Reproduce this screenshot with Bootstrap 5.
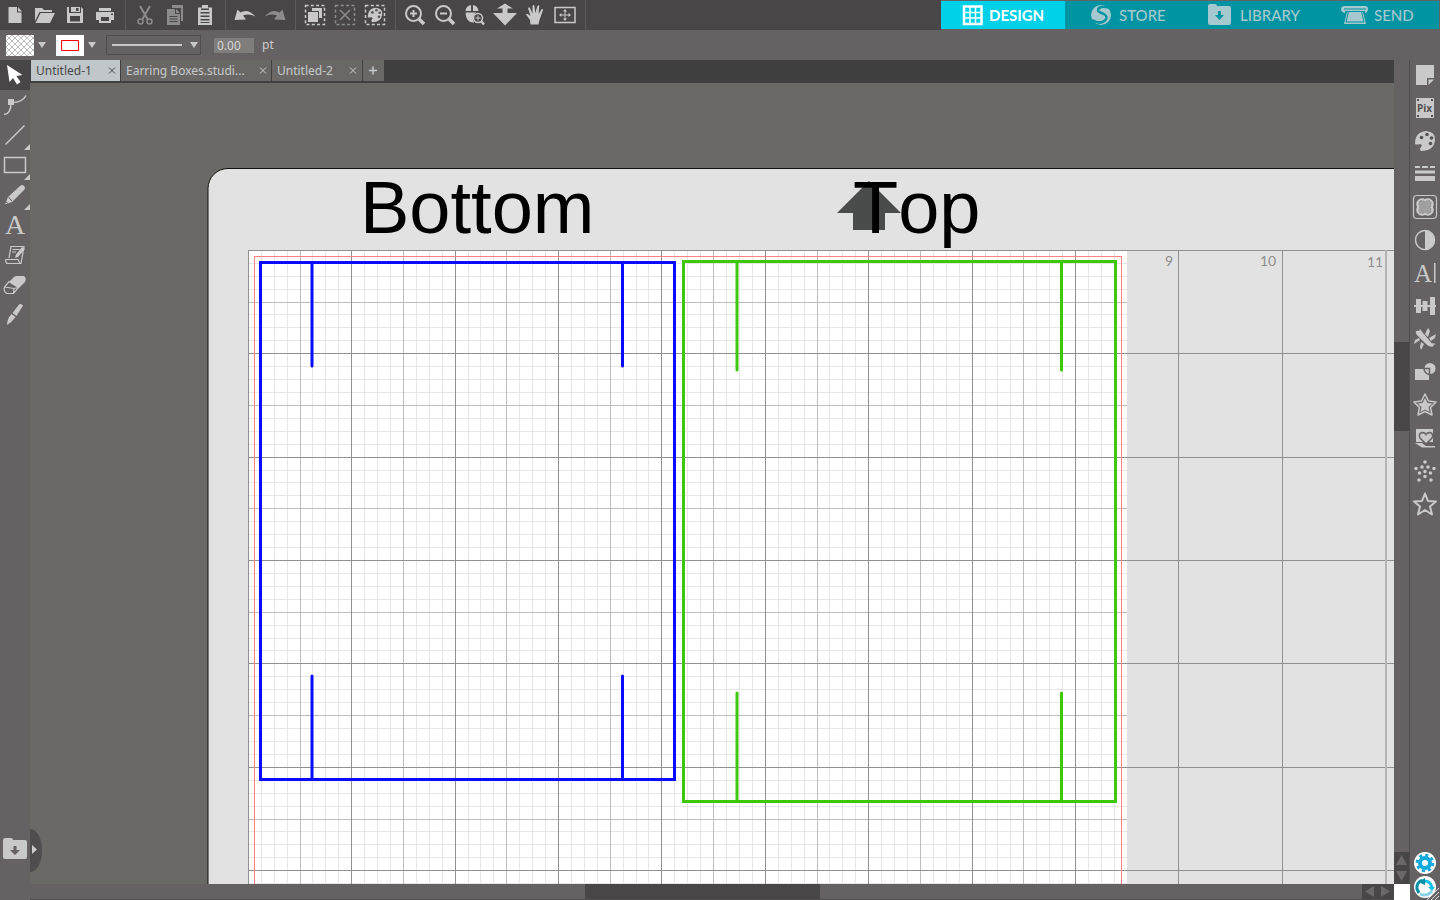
<!DOCTYPE html>
<html lang="en">
<head>
<meta charset="utf-8">
<meta name="viewport" content="width=device-width, initial-scale=1">
<title>Untitled-1</title>
<link href="https://cdn.jsdelivr.net/npm/bootstrap@5.3.0/dist/css/bootstrap.min.css" rel="stylesheet">
<style>
:root{--dark:#484647;--bar:#666162;--ico:#c9c9c9;--dim:#8c8c8c}
body{background:var(--bar);font-family:"Noto Sans",sans-serif;font-size:12px;color:#ccc}
button{border:0;padding:0;background:none;color:inherit}
svg{display:block}
.ic{width:30px;height:30px;fill:currentColor;stroke:none}
.ln,.ic.ln{fill:none;stroke:currentColor}
.tool{width:30px;height:30px;color:var(--ico);flex:none}
.tool:disabled{color:var(--dim)}
.tool.on{background:var(--dark);color:#fff}
.tools-top{background:var(--dark);height:30px}
.sep{width:10px;height:30px;flex:none;background:linear-gradient(#5b595a,#5b595a) 5px 0/1px 30px no-repeat}
.modes{background:#0093a2;height:28px;width:499px;border-right:1px solid var(--bar);font-family:Lato,sans-serif;font-size:15px;font-weight:500}
.modes a{color:#a6c8cf;text-decoration:none;height:28px;gap:4px;padding-left:24px}
.modes a.cur{background:#00d0e8;color:#fff;font-weight:700;padding-left:20px;width:124px}
.m-store{width:118px}.m-lib{width:134px}
.opts{height:30px;padding-left:6px}
.swatch{width:28px;height:21px;background:#fff}
.caret{width:16px;height:20px}
.pick{width:50px}
.linesel{width:95px;height:20px;border:1px solid #504d4e;background:transparent;appearance:none;border-radius:0;display:block}
.over{left:0;top:0;pointer-events:none}
.pt{width:40px;height:15px;border:0;border-radius:0;background:#807d7d;color:#d4d4d4;font-size:12px;line-height:15px;padding:0 3px;margin-left:13px}
.side{width:30px;background:var(--bar);z-index:1}
.lib{margin-bottom:36px}
.tabs{height:23px;background:#404040;gap:1px;padding-left:1px}
.doc{height:21px;background:#6a6866;color:#c6cacc;padding:0 4px 0 5px}
.doc.cur{background:#c0c6c9;color:#4a4a4a}
.doc svg{width:9px;height:9px}
.t1{width:89px}.t2{width:150px}.t3{width:90px}.t4{width:21px;padding:0}
.min0{min-width:0;min-height:0}
.stage{background:#6a6966;overflow:hidden}
.stage>svg{width:100%;height:100%}
.pull{left:0;bottom:12px;width:12px;height:43px;background:#504d4e;border-radius:0 12px 12px 0/0 22px 22px 0}
.hbar{height:16px;border-bottom:1px solid #504d4e}
.vcol{width:15px;background:var(--bar)}
.hthumb{left:40.7%;right:42.1%;top:0;bottom:0;background:var(--dark)}
.vthumb{top:35.6%;height:89px;left:0;right:0;background:var(--dark)}
.arr{background:var(--dark);color:#6c6869}
.arr svg{fill:currentColor}
.corner{height:16px;width:16px;background:#fff}
.panel{width:31px;border-left:1px solid #504d4e;background:var(--bar)}
.panel .tool{height:33px}
.panel .tool svg{margin-bottom:3px}
.round{width:30px;height:24px}
.num{font:14px Lato,sans-serif;fill:#8f8f8f}
.big{font:74px "Liberation Sans",sans-serif;font-kerning:none;fill:#000}
</style>
</head>
<body class="vh-100 overflow-hidden d-flex flex-column">
<header class="d-flex justify-content-between flex-shrink-0">
<div class="tools-top d-flex flex-grow-1">
<button class="tool" aria-label="New"><svg class="ic"><path d="M8.500 7h8.500v5.500h4.500v10.500h-13zM18 7l4 4.500h-4z"/></svg></button>
<button class="tool" aria-label="Open"><svg class="ic"><path d="M5 21V8h7l2 2h8v2H9.500zM10.500 13H25l-5 10H5.500z"/></svg></button>
<button class="tool" aria-label="Save"><svg class="ic"><path fill-rule="evenodd" d="M7 7h2v6h12V7l2 2v14H7zM10 16v5.500h10V16zM11 7h9v5h-9zm5 1v3h2.500V8z"/></svg></button>
<button class="tool" aria-label="Print"><svg class="ic"><path fill-rule="evenodd" d="M9 8h12v3H9zM6 12h18v8h-3v3H9v-3H6zM11 17v4h8v-4zM21 13.500v1.500h2v-1.500z"/></svg></button>
<span class="sep"></span>
<button class="tool" disabled aria-label="Cut"><svg class="ic"><g class="ln" stroke-width="1.500"><path d="M10 6l7.500 13M20 6l-7.500 13" stroke-width="2"/><circle cx="10.500" cy="21.500" r="2.500"/><circle cx="19.500" cy="21.500" r="2.500"/></g></svg></button>
<button class="tool" disabled aria-label="Copy"><svg class="ic"><path d="M12 5h11v16h-2V8h-9zM7 9h8v5h5v11H7zM16 9l4 4h-4z"/><path d="M9.500 16.500h8M9.500 19h8M9.500 21.500h8" stroke="#484647"/></svg></button>
<button class="tool" aria-label="Paste"><svg class="ic"><path fill-rule="evenodd" d="M8 7.500h4V5h6v2.500h4V25H8zM10.500 12v1.500h9V12zm0 3.500V17h9v-1.500zm0 3.500v1.500h9V19zm0 3v1h9v-1zM11 8.500V10h8V8.500z"/></svg></button>
<span class="sep"></span>
<button class="tool" aria-label="Undo"><svg class="ic"><path d="M4.500 20L7.500 9.500l3 3Q18 8 25.500 16.500Q19 13 13 15.500l3 4z"/></svg></button>
<button class="tool" disabled aria-label="Redo"><svg class="ic"><path d="M25.500 20L22.500 9.500l-3 3Q12 8 4.500 16.500Q11 13 17 15.500l-3 4z"/></svg></button>
<span class="sep"></span>
<button class="tool" aria-label="Select all"><svg class="ic"><path d="M5.500 5.500h19v19h-19z" class="ln" stroke-width="1.500" stroke-dasharray="3 2.300"/><path d="M12 8h10v10h-3v-7h-7z"/><path d="M8 12h10v10H8z"/></svg></button>
<button class="tool" disabled aria-label="Deselect"><svg class="ic"><g class="ln" stroke-width="1.500"><path d="M5.500 5.500h19v19h-19z" stroke-dasharray="3 2.300"/><path d="M10 10l10 10M20 10L10 20"/></g></svg></button>
<button class="tool" aria-label="Select by colour"><svg class="ic"><path d="M5.500 5.500h19v19h-19z" class="ln" stroke-width="1.500" stroke-dasharray="3 2.300"/><use href="#pal" transform="translate(4 4) scale(.73)"/></svg></button>
<span class="sep"></span>
<button class="tool" aria-label="Zoom in"><svg class="ic ln" stroke-width="2"><g class="ln"><circle cx="13.500" cy="13.500" r="7.500"/><path d="M13.500 10v7M10 13.500h7"/><path d="M19 19l5 5" stroke-width="3.500"/></g></svg></button>
<button class="tool" aria-label="Zoom out"><svg class="ic ln" stroke-width="2"><g class="ln"><circle cx="13.500" cy="13.500" r="7.500"/><path d="M10 13.500h7"/><path d="M19 19l5 5" stroke-width="3.500"/></g></svg></button>
<button class="tool" aria-label="Zoom selection"><svg class="ic"><path d="M5.500 11Q6 6 11 5v6zM13 5q5 1 5.500 6H13zM5.500 12.500H16Q11.500 16 14 22.500Q6 23 5.500 12.500z"/><g class="ln"><circle cx="18" cy="18" r="4.500" stroke-width="1.500"/><path d="M18 15.500v5M15.500 18h5"/><path d="M21 21l3 3.500" stroke-width="2.500"/></g></svg></button>
<button class="tool" aria-label="Zoom drag"><svg class="ic"><path d="M15 3.500l8 5h-5.500V13H27L15 25.500L3 13h9.500V8.500H7z"/></svg></button>
<button class="tool" aria-label="Pan"><svg class="ic"><path d="M10.500 24.500L10 20L6 14.500q1-1.500 2.500 0l2 1.500L8 8q1-1.500 2 0l2.500 5.500L12.500 6q1-2 2 0l.700 7L17.500 6q1.500-1.500 1.800 0L18.500 14l3.200-5q1.500-.500 1.300 1L19.500 20l-1 4.500z"/></svg></button>
<button class="tool" aria-label="Fit to page"><svg class="ic"><path class="ln" d="M5 7.500h20v15H5z" stroke-width="1.500"/><path class="ln" d="M15 10.500v9M10.500 15h9"/><path d="M15 9l2 2.500h-4zM15 21l2-2.500h-4zM9 15l2.500-2v4zM21 15l-2.500-2v4z"/></svg></button>
<span class="sep"></span>
</div>
<nav class="modes d-flex my-auto" aria-label="Mode">
<a href="#" class="cur d-flex align-items-center"><svg width="24" height="28" fill="none" stroke="#fff"><path d="M3 5.500h17.500v17.500H3z" stroke-width="2.500"/><path d="M9 5v18M14.500 5v18M3 11.500h17M3 17h17" stroke-width="1.500"/></svg>DESIGN</a>
<a href="#" class="m-store d-flex align-items-center"><svg width="26" height="28" fill="#a6c8cf"><circle cx="12" cy="14" r="10"/><path d="M21 7Q10 4 9 9q0 2 5 3.500q6 3 2 7Q11 24 3 19" fill="none" stroke="#0093a2" stroke-width="2.500"/></svg>STORE</a>
<a href="#" class="m-lib d-flex align-items-center"><svg width="29" height="28" fill="#a6c8cf"><path d="M1 5q0-2 2-2h5q2 0 2 2h12q2 0 2 2v15q0 2-2 2H3q-2 0-2-2z"/><path d="M11 10h3v4h3l-4.500 5L8 14h3z" fill="#0093a2"/></svg>LIBRARY</a>
<a href="#" class="d-flex align-items-center"><svg width="29" height="28" fill="#a6c8cf"><path fill-rule="evenodd" d="M4 5h20q3 0 3 3t-3 4v-2H4v2q-4-1-4-4t4-3z"/><path d="M6 11h16l3 12H3z"/><path d="M7.500 10.500L5 21h18l-2.500-10.500zM3 8h22" fill="none" stroke="#0093a2"/></svg>SEND</a>
</nav>
</header>

<div class="opts d-flex align-items-center flex-shrink-0">
<button class="pick d-flex align-items-center" aria-label="Fill colour"><svg class="swatch"><defs><pattern id="hat" width="6" height="6" patternUnits="userSpaceOnUse"><path d="M0 0l6 6M6 0L0 6" stroke="#bdbdbd"/></pattern></defs><rect width="28" height="21" fill="url(#hat)"/></svg><svg class="caret"><path d="M4 7h8l-4 6z" fill="#c9c9c9"/></svg></button>
<button class="pick d-flex align-items-center" aria-label="Line colour"><svg class="swatch"><path d="M5.500 5.500h17v10h-17z" fill="none" stroke="red"/></svg><svg class="caret"><path d="M4 7h8l-4 6z" fill="#c9c9c9"/></svg></button>
<div class="position-relative"><select class="linesel" aria-label="Line style"><option aria-label="Solid"></option></select>
<svg class="over position-absolute" width="95" height="20"><path d="M6 10h70" stroke="#c9c9c9" stroke-width="2"/><path d="M84 7h8l-4 6z" fill="#c9c9c9"/></svg></div>
<input class="pt" id="lw" value="0.00"><label for="lw" class="ps-2">pt</label>
</div>

<main class="d-flex flex-grow-1 min0">
<aside class="side d-flex flex-column flex-shrink-0">
<button class="tool on" aria-label="Select"><svg class="ic"><path d="M7 5l15.500 10-6 1 4 6-3.500 2.500-4-6.500-3.500 4z"/></svg></button>
<button class="tool" aria-label="Edit points"><svg class="ic"><path class="ln" stroke-width="1.500" d="M4 24.500Q11 24 11 12.500Q22 13 26 5.500"/><path d="M8 9h6v6H8z"/></svg></button>
<button class="tool" aria-label="Line"><svg class="ic"><path class="ln" stroke-width="1.500" d="M5.500 24.500l19-19"/><path d="M30 24v6h-6z"/></svg></button>
<button class="tool" aria-label="Rectangle"><svg class="ic"><path class="ln" stroke-width="1.500" d="M4.500 7.500h21v15h-21z"/><path d="M30 24v6h-6z"/></svg></button>
<button class="tool" aria-label="Freehand"><svg class="ic"><path d="M20 6q2-2 4 0t0 4L12 22l-7 2.500L8 17z"/><path d="M8.500 17l3.500 4M6 22l2 1.500" stroke="#666162"/><path d="M30 24v6h-6z"/></svg></button>
<button class="tool" aria-label="Text"><svg class="ic"><text x="5" y="24" font-family="Liberation Serif" font-size="28">A</text></svg></button>
<button class="tool" aria-label="Sketch"><svg class="ic"><path class="ln" stroke-width="1.200" d="M9 18L11 6.500h13L21 23.500H7q-2-2-1-4h12l2 4M12.500 9.500h7M12 12h4"/><path d="M22 7l3 2-7 8-3 1 1-3.500z"/></svg></button>
<button class="tool" aria-label="Eraser"><svg class="ic"><path d="M14 7q1-1 3-1h7q3 2 1 6l-6 6-10-6z"/><path class="ln" stroke-width="1.200" d="M9 11.500l9.500 6-5 6H7q-4-2-2.500-6.500zM4.500 17l9.500 1.500M14 18.500l-.500 5M14 18.500l4.500-1"/></svg></button>
<button class="tool" aria-label="Knife"><svg class="ic"><path d="M19 4.500q2-1.500 4 1L16.500 16l-4-3zM11.500 14l4 3Q12 22 7 25q0-6 4.500-11z"/></svg></button>
<button class="tool lib mt-auto" aria-label="Library"><svg class="ic"><path d="M3 6.500Q3 4 5 4h6q2 0 2 2h12q2 0 2 2v15q0 2-2 2H5q-2 0-2-2z"/><path d="M13.500 12h3v4H20l-5 5-5-5h3.500z" fill="#666162"/></svg></button>
</aside>

<section class="d-flex flex-column flex-grow-1 min0">
<div class="tabs d-flex flex-shrink-0">
<button class="doc cur t1 d-flex justify-content-between align-items-center">Untitled-1<svg class="ln"><path d="M2 1.500l6 6M8 1.500l-6 6"/></svg></button>
<button class="doc t2 d-flex justify-content-between align-items-center">Earring Boxes.studi...<svg class="ln"><path d="M2 1.500l6 6M8 1.500l-6 6"/></svg></button>
<button class="doc t3 d-flex justify-content-between align-items-center">Untitled-2<svg class="ln"><path d="M1 1.500l6 6M7 1.500l-6 6"/></svg></button>
<button class="doc t4 d-flex justify-content-center align-items-center" aria-label="New tab"><svg class="ln" stroke-width="1.500"><path d="M4 .500v8M0 4.500h8"/></svg></button>
</div>
<div class="stage flex-grow-1 position-relative min0">
<svg aria-label="Cutting mat"><g transform="translate(218 167)" shape-rendering="crispEdges">
<rect x="-40" y="-81.500" width="3000" height="3000" rx="20" fill="#e2e2e2" stroke="#111" shape-rendering="auto"/>
<rect width="879" height="3000" fill="#fff"/>
<g fill="none">
<path id="g8" stroke="#e6e6e6"/><path id="g2" stroke="#bdbdbd"/><path id="g1" stroke="#919191"/>
<path d="M1138 0v3000" stroke="#b5b5b5" stroke-width="2"/>
<path d="M6.500 3000V6.500h867V3000" stroke="#ff8080"/>
</g>
<path d="M621-69L653-37H637V-20H605V-37H589z" fill="#4a4c4b" shape-rendering="auto"/>
<g class="big" shape-rendering="auto"><text x="112" y="-17">Bottom</text><text x="605" y="-17">Top</text></g>
<g class="num"><text x="917" y="16">9</text><text x="1012" y="16">10</text><text x="1119" y="17">11</text></g>
<g fill="none" stroke-width="3" stroke-linecap="round" shape-rendering="auto">
<path stroke="#0a0aff" d="M12.500 12.500h414v517h-414zM64 12.500V116M374.500 12.500V116M64 426v103M374.500 426v103"/>
<path stroke="#3fc80a" d="M435.500 11.500h432v540h-432zM489 11.500V120M813.500 11.500V120M489 443v108M813.500 443v108"/>
</g></g></svg>
<button class="pull position-absolute" aria-label="Show library"><svg width="12" height="43"><path d="M2 16l5 4.500-5 4.500z" fill="#ccc"/></svg></button>
</div>
<div class="hbar position-relative flex-shrink-0 d-flex justify-content-end"><div class="hthumb position-absolute"></div>
<button class="arr" aria-label="Scroll left"><svg width="16" height="15"><path d="M12 2v11L3 7.500z"/></svg></button><button class="arr" aria-label="Scroll right"><svg width="16" height="15"><path d="M3 2v11l9-5.500z"/></svg></button></div>
</section>

<div class="vcol d-flex flex-column flex-shrink-0"><div class="flex-grow-1 position-relative"><div class="vthumb position-absolute"></div></div>
<button class="arr" aria-label="Scroll up"><svg width="15" height="16"><path d="M2 13h11L7.500 3z"/></svg></button><button class="arr" aria-label="Scroll down"><svg width="15" height="16"><path d="M2 3h11L7.500 13z"/></svg></button>
<div class="corner position-relative"></div></div>

<aside class="panel d-flex flex-column flex-shrink-0">
<button class="tool" aria-label="Page setup"><svg class="ic"><path d="M6 5h18v13h-7v7H6zM18.500 19.500H24L18.500 25z"/></svg></button>
<button class="tool" aria-label="PixScan"><svg class="ic"><path d="M6 5h18v20H6z"/><g fill="#565152"><path d="M7 6h2v2H7zM21 6h2v2h-2zM7 22h2v2H7zM21 22h2v2h-2z"/><text x="7" y="19" font-family="Noto Sans" font-size="10" font-weight="700">Pix</text></g></svg></button>
<button class="tool" aria-label="Fill"><svg class="ic"><g id="pal"><path d="M5 18Q5 6 16 5Q26 6 25 14Q24 25 11 25Q9 23 11 21Q13 19 10 18Q7 19 5 18z"/><g fill="#565354"><circle cx="11.500" cy="11.500" r="1.800"/><circle cx="17" cy="8.500" r="1.800"/><circle cx="21.500" cy="12" r="1.800"/><circle cx="20.500" cy="17.500" r="1.800"/></g></g></svg></button>
<button class="tool" aria-label="Line style"><svg class="ic"><path d="M5 7h5v2H5zM12 7h6v2h-6zM20 7h5v2h-5zM5 11.500h20v3H5zM5 17h20v5H5z"/></svg></button>
<button class="tool" aria-label="Trace"><svg class="ic"><rect class="ln" x="3.500" y="3.500" width="23" height="23" rx="3.500" stroke-width="1.200"/><path d="M8 8q3-3 7-1q4-2 7 1q3 3 1 7q2 4-1 7q-3 3-7 1q-4 2-7-1q-3-3-1-7q-2-4 1-7z"/><path d="M10 9q3-1 5 1q2-2 5-1q2 2 0 6q2 4 0 6q-3 1-5-1q-2 2-5 1q-2-2 0-6q-2-4 0-6z" fill="#a0a0a0" stroke="#888" stroke-dasharray="2 1"/></svg></button>
<button class="tool" aria-label="Image effects"><svg class="ic"><circle class="ln" cx="15" cy="15" r="9.500" stroke-width="1.500"/><path d="M15 5a10 10 0 010 20z"/></svg></button>
<button class="tool" aria-label="Text style"><svg class="ic"><text x="4" y="24" font-family="Liberation Serif" font-size="25">A</text><path d="M24 5h1.500v20H24z"/></svg></button>
<button class="tool" aria-label="Align"><svg class="ic"><path d="M4 14h22v2H4zM6 8h5v14H6zM12.500 10h5v10h-5zM20 6h5v18h-5z"/></svg></button>
<button class="tool" aria-label="Transform"><svg class="ic"><path d="M6 7q4-1 8 3l10 12q-4 2-8-2L7 11q-2-2-1-4zM15 10l3-6 2 3-2 6zM19 14l7-4-1 4-4 3zM14 20l-3 6-1-3 1-5zM10 16l-6 4 1-4 4-2zM9 7l1-2 3 4zM22 19l4 1-3 1z"/></svg></button>
<button class="tool" aria-label="Modify"><svg class="ic"><circle cx="20" cy="11.500" r="5.500"/><path d="M5 12h14v11H5z"/><path d="M14 11.500H19.500V17.500a6 6 0 01-5.500-6z" fill="none" stroke="#666162" stroke-width="1.500"/></svg></button>
<button class="tool" aria-label="Offset"><svg class="ic"><path class="ln" stroke-width="1.500" stroke-linejoin="round" d="M15 4l3.500 7 7.500 1-5.500 5.500L22 25l-7-3.500L8 25l1.500-7.500L4 12l7.500-1z"/><path d="M15 8l2.500 5 5 .500-4 3.500 1 5-4.500-2.500-4.500 2.500 1-5-4-3.500 5-.500z"/></svg></button>
<button class="tool" aria-label="Print and cut"><svg class="ic"><path d="M6 6h17v13H6zM5 20h7l4 3h9v1.500H12z"/><path d="M16 21l-6-6q-2-4 2-5.500 3 0 4 2 1-2 4-2 4 1.500 2 5.500z" stroke="#666162" stroke-width="1.500"/></svg></button>
<button class="tool" aria-label="Stipple"><svg class="ic"><path d="M15 6v0M12 11v0M18 11v0M6 12.500v0M24 12.500v0M9.500 17v0M15 15.500v0M20.500 17v0M15 20.500v0M9 24v0M21 24v0" stroke="currentColor" stroke-width="3.600" stroke-linecap="round"/></svg></button>
<button class="tool" aria-label="Favourites"><svg class="ic"><path class="ln" stroke-width="2" stroke-linejoin="round" d="M15 4.500l3 7.500 8 .500-6 5 2 8-7-4.500-7 4.500 2-8-6-5 8-.500z"/></svg></button>
<button class="round mt-auto" aria-label="Preferences"><svg width="30" height="24"><circle cx="15" cy="11" r="11" fill="#fff"/><g fill="none" stroke="#14a9dc"><circle cx="15" cy="11" r="5" stroke-width="4"/><circle cx="15" cy="11" r="7.900" stroke-width="2.800" stroke-dasharray="3.100 3.100"/></g></svg></button>
<button class="round" aria-label="Sync"><svg width="30" height="24"><circle cx="15" cy="11" r="11" fill="#fff"/><g fill="none" stroke-width="3"><path d="M12 4q-6 3-5 9l2 4" stroke="#088fa5"/><path d="M14 5q7 0 8 7" stroke="#14c1e6"/><path d="M10 18q7 3 12-3" stroke="#8ed4e7"/></g><path d="M8 6l7-4v7z" fill="#088fa5"/><path d="M18 11h7l-3 4z" fill="#14c1e6"/><path d="M17 24L29 12M21 24l8-8M25 24l4-4" stroke="#ddd"/></svg></button>
</aside>
</main>
<script src="https://cdn.jsdelivr.net/npm/bootstrap@5.3.0/dist/js/bootstrap.bundle.min.js"></script>
<script>
// Mat grid: one inch is 103.4 px; the sheet is 8.5 inches wide and ruled in eighths.
const inch = 103.4, sheet = 879, far = 3000;
const rules = { g8: '', g2: '', g1: '' };
for (let i = 0; i * inch / 8 < far; i++) {
  const key = i % 8 === 0 ? 'g1' : i % 4 === 0 ? 'g2' : 'g8';
  const p = Math.floor(i * inch / 8 + 0.3) + 0.5;
  if (key === 'g1' ? i !== 88 : p < sheet) rules[key] += `M${p} 0V${far}`;
  rules[key] += `M0 ${p}H${key === 'g1' ? far : sheet}`;
}
for (const id in rules) document.getElementById(id).setAttribute('d', rules[id]);
</script>
</body>
</html>
